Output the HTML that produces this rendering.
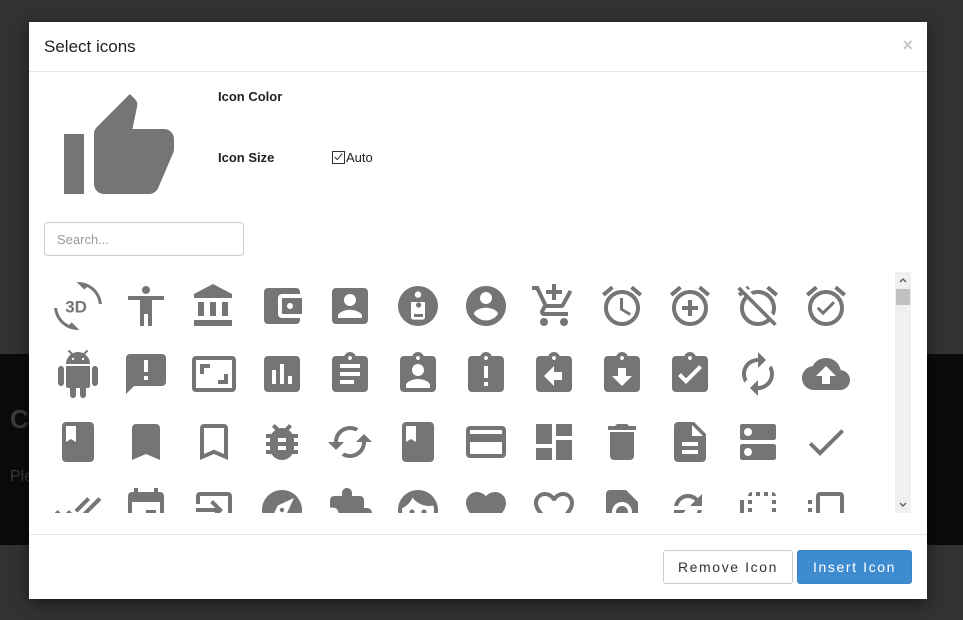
<!DOCTYPE html>
<html><head><meta charset="utf-8">
<style>
*{box-sizing:border-box;margin:0;padding:0}
body{width:963px;height:620px;overflow:hidden;background:#323232;font-family:"Liberation Sans",Arial,sans-serif;position:relative}
.band{position:absolute;left:0;top:354px;width:963px;height:191px;background:#0b0b0b}
.bgc{position:absolute;left:10px;top:404px;font-size:26px;font-weight:bold;color:#3a3a3a}
.bgp{position:absolute;left:10px;top:468px;font-size:16px;color:#3a3a3a}
.modal{position:absolute;left:29px;top:22px;width:898px;height:577px;background:#fff;box-shadow:0 4px 14px rgba(0,0,0,.5)}
.hdr{height:50px;border-bottom:1px solid #e5e5e5;position:relative}
.hdr h4{position:absolute;left:15px;top:15px;font-size:17px;font-weight:normal;color:#222}
.close{position:absolute;right:14px;top:13px;font-size:18px;color:#c8c8c8;font-weight:bold}
.lbl{position:absolute;font-size:13px;font-weight:bold;color:#222}
.auto{position:absolute;left:303px;top:128px;font-size:13px;color:#222;display:flex;align-items:center}
.cb{width:13px;height:13px;border:1px solid #333;margin-right:1px;position:relative}
.search{position:absolute;left:15px;top:200px;width:200px;height:34px;border:1px solid #ccc;border-radius:4px;font-size:13px;color:#999;padding:9px 12px}
.grid{position:absolute;left:15px;top:250px;width:850px;height:241px;overflow:hidden}
.grid svg{position:absolute;width:48px;height:48px;fill:#757575}
.sb{position:absolute;left:866px;top:250px;width:16px;height:241px;background:#f0f0f0}
.th{position:absolute;left:1px;top:17px;width:14px;height:16px;background:#c1c1c1}
.ftr{position:absolute;left:0;top:512px;width:898px;border-top:1px solid #e5e5e5;height:65px}
.btn{position:absolute;top:15px;height:34px;border-radius:3px;font-size:14px;letter-spacing:1.6px;text-align:center;line-height:32px}
</style></head><body>
<div class="band"></div>
<div class="bgc">C</div><div class="bgp">Ple</div>
<div class="modal">
<div class="hdr"><h4>Select icons</h4><span class="close">×</span></div>
<svg style="position:absolute;left:30px;top:67px;width:120px;height:120px;fill:#757575" viewBox="0 0 24 24"><path d="M1 21h4V9H1v12zm22-11c0-1.1-.9-2-2-2h-6.31l.95-4.57.03-.32c0-.41-.17-.79-.44-1.06L14.17 1 7.59 7.59C7.22 7.950 7 8.45 7 9v10c0 1.1.9 2 2 2h9c.83 0 1.54-.5 1.84-1.22l3.02-7.05c.09-.23.14-.47.14-.73v-1.91l-.01-.01L23 10z"/></svg>
<div class="lbl" style="left:189px;top:67px">Icon Color</div>
<div class="lbl" style="left:189px;top:128px">Icon Size</div>
<div class="auto"><span class="cb"><svg viewBox="0 0 13 13" style="position:absolute;left:0;top:0;width:11px;height:11px"><path d="M2 6l3 3 6-7" stroke="#333" stroke-width="1.2" fill="none"/></svg></span>Auto</div>
<div class="search">Search...</div>
<div class="grid">
<svg style="left:10px;top:10px" viewBox="0 0 24 24"><path d="M7.52 21.48C4.250 19.94 1.91 16.76 1.55 13H.05C.56 19.16 5.71 24 12 24l.66-.03-3.81-3.81-1.33 1.32zM12 0l-.66.03 3.81 3.81 1.33-1.33c3.27 1.55 5.61 4.72 5.96 8.480h1.5C23.44 4.84 18.29 0 12 0z"/><text x="5.6" y="15.2" font-size="8.5" font-weight="bold" fill="#757575" font-family="Liberation Sans">3D</text></svg>
<svg style="left:78px;top:10px" viewBox="0 0 24 24"><path d="M12 2c1.1 0 2 .9 2 2s-.9 2-2 2-2-.9-2-2 .9-2 2-2zm9 7h-6v13h-2v-6h-2v6H9V9H3V7h18v2z"/></svg>
<svg style="left:146px;top:10px" viewBox="0 0 24 24"><path d="M4 10v7h3v-7H4zm6 0v7h3v-7h-3zM2 22h19v-3H2v3zm14-12v7h3v-7h-3zm-4.5-9L2 6v2h19V6l-9.5-5z"/></svg>
<svg style="left:214px;top:10px" viewBox="0 0 24 24"><path d="M21 18v1c0 1.1-.9 2-2 2H5c-1.11 0-2-.9-2-2V5c0-1.1.89-2 2-2h14c1.1 0 2 .9 2 2v1h-9c-1.11 0-2 .9-2 2v8c0 1.1.89 2 2 2h9zm-9-2h10V8H12v8zm4-2.5c-.83 0-1.5-.67-1.5-1.5s.67-1.5 1.5-1.5 1.5.67 1.5 1.5-.67 1.5-1.5 1.5z"/></svg>
<svg style="left:282px;top:10px" viewBox="0 0 24 24"><path d="M3 5v14c0 1.1.89 2 2 2h14c1.1 0 2-.9 2-2V5c0-1.1-.9-2-2-2H5c-1.11 0-2 .9-2 2zm12 4c0 1.66-1.34 3-3 3s-3-1.34-3-3 1.34-3 3-3 3 1.34 3 3zm-9 8c0-2 4-3.1 6-3.1s6 1.1 6 3.1v1H6v-1z"/></svg>
<svg style="left:350px;top:10px" viewBox="0 0 24 24"><circle cx="12" cy="12" r="10"/><circle cx="12" cy="6.3" r="1.6" fill="#fff"/><path d="M8.5 10h7v7.5c0 .8-.6 1.3-1.3 1.3H9.8c-.8 0-1.3-.6-1.3-1.3z" fill="#fff"/><path d="M11 11.5a1.3 1.3 0 1 0 2.6 0 1.3 1.3 0 1 0-2.6 0zM10 16h4.5v1.5H10z" fill="#757575"/></svg>
<svg style="left:418px;top:10px" viewBox="0 0 24 24"><path d="M12 2C6.48 2 2 6.48 2 12s4.48 10 10 10 10-4.480 10-10S17.52 2 12 2zm0 3c1.66 0 3 1.34 3 3s-1.34 3-3 3-3-1.34-3-3 1.34-3 3-3zm0 14.2c-2.5 0-4.71-1.28-6-3.22.03-1.99 4-3.08 6-3.08 1.99 0 5.97 1.09 6 3.08-1.29 1.94-3.5 3.22-6 3.22z"/></svg>
<svg style="left:486px;top:10px" viewBox="0 0 24 24"><path d="M11 9h2V6h3V4h-3V1h-2v3H8v2h3v3zm-4 9c-1.1 0-1.99.9-1.99 2S5.9 22 7 22s2-.9 2-2-.9-2-2-2zm10 0c-1.1 0-1.99.9-1.99 2s.89 2 1.99 2 2-.9 2-2-.9-2-2-2zm-9.83-3.25l.03-.12.9-1.63h7.45c.75 0 1.41-.41 1.75-1.03l3.86-7.01L19.42 4h-.01l-1.1 2-2.76 5H8.53l-.13-.27L6.16 6l-.95-2-.94-2H1v2h2l3.6 7.59-1.35 2.45c-.16.28-.25.61-.25.96 0 1.1.9 2 2 2h12v-2H7.42c-.13 0-.25-.11-.25-.25z"/></svg>
<svg style="left:554px;top:10px" viewBox="0 0 24 24"><path d="M22 5.72l-4.6-3.86-1.29 1.53 4.6 3.86L22 5.72zM7.88 3.39L6.6 1.86 2 5.71l1.29 1.53 4.59-3.85zM12.5 8H11v6l4.75 2.85.75-1.23-4-2.37V8zM12 4c-4.97 0-9 4.03-9 9s4.02 9 9 9c4.97 0 9-4.03 9-9s-4.03-9-9-9zm0 16c-3.87 0-7-3.13-7-7s3.13-7 7-7 7 3.13 7 7-3.13 7-7 7z"/></svg>
<svg style="left:622px;top:10px" viewBox="0 0 24 24"><path d="M22 5.72l-4.6-3.86-1.29 1.53 4.6 3.86L22 5.72zM7.88 3.39L6.6 1.86 2 5.71l1.29 1.53 4.59-3.85zM12 4c-4.97 0-9 4.03-9 9s4.02 9 9 9c4.97 0 9-4.03 9-9s-4.03-9-9-9zm0 16c-3.87 0-7-3.13-7-7s3.13-7 7-7 7 3.13 7 7-3.13 7-7 7zM13 9h-2v3H8v2h3v3h2v-3h3v-2h-3V9z"/></svg>
<svg style="left:690px;top:10px" viewBox="0 0 24 24"><path d="M12 6c3.87 0 7 3.13 7 7 0 .84-.16 1.65-.43 2.4l1.52 1.52c.58-1.19.91-2.51.91-3.92 0-4.97-4.03-9-9-9-1.41 0-2.73.33-3.92.91L9.6 6.43C10.35 6.16 11.16 6 12 6zm10-.28l-4.6-3.86-1.29 1.53 4.6 3.86L22 5.72zM2.92 2.29L1.65 3.57 2.98 4.9l-1.11.93 1.42 1.42 1.11-.94.8.8C3.83 8.69 3 10.75 3 13c0 4.97 4.02 9 9 9 2.25 0 4.31-.83 5.89-2.2l2.2 2.2 1.27-1.27L3.89 3.27l-.97-.98zm13.55 16.1C15.26 19.39 13.7 20 12 20c-3.87 0-7-3.13-7-7 0-1.7.61-3.26 1.61-4.47l9.86 9.86zM8.02 3.28L6.6 1.86l-.86.71 1.42 1.42.86-.71z"/></svg>
<svg style="left:758px;top:10px" viewBox="0 0 24 24"><path d="M22 5.72l-4.6-3.86-1.29 1.53 4.6 3.86L22 5.72zM7.88 3.39L6.6 1.86 2 5.71l1.29 1.53 4.59-3.85zM12 4c-4.97 0-9 4.03-9 9s4.02 9 9 9c4.97 0 9-4.03 9-9s-4.03-9-9-9zm0 16c-3.87 0-7-3.13-7-7s3.13-7 7-7 7 3.13 7 7-3.13 7-7 7zM10.54 14.53L8.41 12.4l-1.06 1.06 3.18 3.18 6-6-1.06-1.06-4.93 4.95z"/></svg>

<svg style="left:10px;top:78px" viewBox="0 0 24 24"><path d="M6 18c0 .55.45 1 1 1h1v3.5c0 .83.67 1.5 1.5 1.5s1.5-.67 1.5-1.5V19h2v3.5c0 .83.67 1.5 1.5 1.5s1.5-.67 1.5-1.5V19h1c.55 0 1-.45 1-1V8H6v10zM3.5 8C2.67 8 2 8.67 2 9.5v7c0 .83.67 1.5 1.5 1.5S5 17.33 5 16.5v-7C5 8.67 4.33 8 3.5 8zm17 0c-.83 0-1.5.67-1.5 1.5v7c0 .83.67 1.5 1.5 1.5s1.5-.67 1.5-1.5v-7c0-.83-.67-1.5-1.5-1.5zm-4.97-5.84l1.3-1.3c.2-.2.2-.51 0-.71-.2-.2-.51-.2-.71 0l-1.48 1.48C13.85 1.23 12.95 1 12 1c-.96 0-1.86.23-2.66.63L7.85.15c-.2-.2-.51-.2-.71 0-.2.2-.2.51 0 .71l1.31 1.31C6.97 3.26 6 5.010 6 7h12c0-1.99-.97-3.75-2.47-4.84zM10 5H9V4h1v1zm5 0h-1V4h1v1z"/></svg>
<svg style="left:78px;top:78px" viewBox="0 0 24 24"><path d="M20 2H4c-1.1 0-1.99.9-1.99 2L2 22l4-4h14c1.1 0 2-.9 2-2V4c0-1.1-.9-2-2-2zm-7 9h-2V5h2v6zm0 4h-2v-2h2v2z"/></svg>
<svg style="left:146px;top:78px" viewBox="0 0 24 24"><path d="M19 12h-2v3h-3v2h5v-5zM7 9h3V7H5v5h2V9zm14-6H3c-1.1 0-2 .9-2 2v14c0 1.1.9 2 2 2h18c1.1 0 2-.9 2-2V5c0-1.1-.9-2-2-2zm0 16.01H3V4.99h18v14.02z"/></svg>
<svg style="left:214px;top:78px" viewBox="0 0 24 24"><path d="M19 3H5c-1.1 0-2 .9-2 2v14c0 1.1.9 2 2 2h14c1.1 0 2-.9 2-2V5c0-1.1-.9-2-2-2zM9 17H7v-7h2v7zm4 0h-2V7h2v10zm4 0h-2v-4h2v4z"/></svg>
<svg style="left:282px;top:78px" viewBox="0 0 24 24"><path d="M19 3h-4.18C14.4 1.84 13.3 1 12 1c-1.3 0-2.4.84-2.82 2H5c-1.1 0-2 .9-2 2v14c0 1.1.9 2 2 2h14c1.1 0 2-.9 2-2V5c0-1.1-.9-2-2-2zm-7 0c.55 0 1 .45 1 1s-.45 1-1 1-1-.45-1-1 .45-1 1-1zm2 14H7v-2h7v2zm3-4H7v-2h10v2zm0-4H7V7h10v2z"/></svg>
<svg style="left:350px;top:78px" viewBox="0 0 24 24"><path d="M19 3h-4.18C14.4 1.84 13.3 1 12 1c-1.3 0-2.4.84-2.82 2H5c-1.1 0-2 .9-2 2v14c0 1.1.9 2 2 2h14c1.1 0 2-.9 2-2V5c0-1.1-.9-2-2-2zm-7 0c.55 0 1 .45 1 1s-.45 1-1 1-1-.45-1-1 .45-1 1-1zm0 4c1.66 0 3 1.34 3 3s-1.34 3-3 3-3-1.34-3-3 1.34-3 3-3zm6 12H6v-1.4c0-2 4-3.1 6-3.1s6 1.1 6 3.1V19z"/></svg>
<svg style="left:418px;top:78px" viewBox="0 0 24 24"><path d="M19 3h-4.18C14.4 1.84 13.3 1 12 1c-1.3 0-2.4.84-2.82 2H5c-1.1 0-2 .9-2 2v14c0 1.1.9 2 2 2h14c1.1 0 2-.9 2-2V5c0-1.1-.9-2-2-2zm-6 15h-2v-2h2v2zm0-4h-2V8h2v6zm-1-9c-.55 0-1-.45-1-1s.45-1 1-1 1 .45 1 1-.45 1-1 1z"/></svg>
<svg style="left:486px;top:78px" viewBox="0 0 24 24"><path d="M19 3h-4.18C14.4 1.84 13.3 1 12 1c-1.3 0-2.4.84-2.82 2H5c-1.1 0-2 .9-2 2v14c0 1.1.9 2 2 2h14c1.1 0 2-.9 2-2V5c0-1.1-.9-2-2-2zm-7 0c.55 0 1 .45 1 1s-.45 1-1 1-1-.45-1-1 .45-1 1-1zm4 12h-4v3l-5-5 5-5v3h4v4z"/></svg>
<svg style="left:554px;top:78px" viewBox="0 0 24 24"><path d="M19 3h-4.18C14.4 1.84 13.3 1 12 1c-1.3 0-2.4.84-2.82 2H5c-1.1 0-2 .9-2 2v14c0 1.1.9 2 2 2h14c1.1 0 2-.9 2-2V5c0-1.1-.9-2-2-2zm-7 0c.55 0 1 .45 1 1s-.45 1-1 1-1-.45-1-1 .45-1 1-1zm0 15l-5-5h3V9h4v4h3l-5 5z"/></svg>
<svg style="left:622px;top:78px" viewBox="0 0 24 24"><path d="M19 3h-4.18C14.4 1.84 13.3 1 12 1c-1.3 0-2.4.84-2.82 2H5c-1.1 0-2 .9-2 2v14c0 1.1.9 2 2 2h14c1.1 0 2-.9 2-2V5c0-1.1-.9-2-2-2zm-7 0c.55 0 1 .45 1 1s-.45 1-1 1-1-.45-1-1 .45-1 1-1zm-2 14l-4-4 1.41-1.41L10 14.17l6.59-6.59L18 9l-8 8z"/></svg>
<svg style="left:690px;top:78px" viewBox="0 0 24 24"><path d="M12 6v3l4-4-4-4v3c-4.42 0-8 3.58-8 8 0 1.57.46 3.03 1.24 4.26L6.7 14.8c-.45-.83-.7-1.79-.7-2.8 0-3.31 2.69-6 6-6zm6.76 1.74L17.3 9.2c.44.84.7 1.79.7 2.8 0 3.31-2.69 6-6 6v-3l-4 4 4 4v-3c4.42 0 8-3.58 8-8 0-1.57-.46-3.03-1.24-4.26z"/></svg>
<svg style="left:758px;top:78px" viewBox="0 0 24 24"><path d="M19.35 10.04C18.67 6.59 15.64 4 12 4 9.11 4 6.6 5.64 5.35 8.04 2.34 8.36 0 10.91 0 14c0 3.31 2.69 6 6 6h13c2.76 0 5-2.24 5-5 0-2.64-2.05-4.78-4.65-4.96zM14 13v4h-4v-4H7l5-5 5 5h-3z"/></svg>

<svg style="left:10px;top:146px" viewBox="0 0 24 24"><path d="M18 2H6c-1.1 0-2 .9-2 2v16c0 1.1.9 2 2 2h12c1.1 0 2-.9 2-2V4c0-1.1-.9-2-2-2zM6 4h5v8l-2.5-1.5L6 12V4z"/></svg>
<svg style="left:78px;top:146px" viewBox="0 0 24 24"><path d="M17 3H7c-1.1 0-1.99.9-1.99 2L5 21l7-3 7 3V5c0-1.1-.9-2-2-2z"/></svg>
<svg style="left:146px;top:146px" viewBox="0 0 24 24"><path d="M17 3H7c-1.1 0-1.99.9-1.99 2L5 21l7-3 7 3V5c0-1.1-.9-2-2-2zm0 15l-5-2.18L7 18V5h10v13z"/></svg>
<svg style="left:214px;top:146px" viewBox="0 0 24 24"><path d="M20 8h-2.81c-.45-.78-1.07-1.45-1.82-1.96L17 4.41 15.59 3l-2.17 2.17C12.96 5.06 12.49 5 12 5c-.49 0-.96.06-1.41.17L8.41 3 7 4.41l1.62 1.63C7.88 6.55 7.26 7.22 6.81 8H4v2h2.09c-.05.33-.09.66-.09 1v1H4v2h2v1c0 .34.04.67.09 1H4v2h2.81c1.04 1.79 2.97 3 5.19 3s4.15-1.21 5.19-3H20v-2h-2.09c.05-.33.09-.66.09-1v-1h2v-2h-2v-1c0-.34-.04-.67-.09-1H20V8zm-6 8h-4v-2h4v2zm0-4h-4v-2h4v2z"/></svg>
<svg style="left:282px;top:146px" viewBox="0 0 24 24"><path d="M19 8l-4 4h3c0 3.31-2.69 6-6 6-1.01 0-1.97-.25-2.8-.7l-1.46 1.46C8.97 19.54 10.43 20 12 20c4.42 0 8-3.58 8-8h3l-4-4zM6 12c0-3.31 2.69-6 6-6 1.01 0 1.97.25 2.8.7l1.46-1.46C15.03 4.46 13.57 4 12 4c-4.42 0-8 3.58-8 8H1l4 4 4-4H6z"/></svg>
<svg style="left:350px;top:146px" viewBox="0 0 24 24"><path d="M18 2H6c-1.1 0-2 .9-2 2v16c0 1.1.9 2 2 2h12c1.1 0 2-.9 2-2V4c0-1.1-.9-2-2-2zM6 4h5v8l-2.5-1.5L6 12V4z"/></svg>
<svg style="left:418px;top:146px" viewBox="0 0 24 24"><path d="M20 4H4c-1.11 0-1.99.89-1.99 2L2 18c0 1.11.89 2 2 2h16c1.11 0 2-.89 2-2V6c0-1.11-.89-2-2-2zm0 14H4v-6h16v6zm0-10H4V6h16v2z"/></svg>
<svg style="left:486px;top:146px" viewBox="0 0 24 24"><path d="M3 13h8V3H3v10zm0 8h8v-6H3v6zm10 0h8V11h-8v10zm0-18v6h8V3h-8z"/></svg>
<svg style="left:554px;top:146px" viewBox="0 0 24 24"><path d="M6 19c0 1.1.9 2 2 2h8c1.1 0 2-.9 2-2V7H6v12zM19 4h-3.5l-1-1h-5l-1 1H5v2h14V4z"/></svg>
<svg style="left:622px;top:146px" viewBox="0 0 24 24"><path d="M14 2H6c-1.1 0-1.99.9-1.99 2L4 20c0 1.1.89 2 1.99 2H18c1.1 0 2-.9 2-2V8l-6-6zm2 16H8v-2h8v2zm0-4H8v-2h8v2zm-3-5V3.5L18.5 9H13z"/></svg>
<svg style="left:690px;top:146px" viewBox="0 0 24 24"><path d="M20 13H4c-.55 0-1 .45-1 1v6c0 .55.45 1 1 1h16c.55 0 1-.45 1-1v-6c0-.55-.45-1-1-1zM7 19c-1.1 0-2-.9-2-2s.9-2 2-2 2 .9 2 2-.9 2-2 2zM20 3H4c-.55 0-1 .45-1 1v6c0 .55.45 1 1 1h16c.55 0 1-.45 1-1V4c0-.55-.45-1-1-1zM7 9c-1.1 0-2-.9-2-2s.9-2 2-2 2 .9 2 2-.9 2-2 2z"/></svg>
<svg style="left:758px;top:146px" viewBox="0 0 24 24"><path d="M9 16.2L4.8 12l-1.4 1.4L9 19 21 7l-1.4-1.4L9 16.2z"/></svg>

<svg style="left:10px;top:214px" viewBox="0 0 24 24"><path d="M18 7l-1.41-1.41-6.34 6.34 1.41 1.41L18 7zm4.24-1.41L11.66 16.17 7.48 12l-1.41 1.41L11.66 19l12-12-1.42-1.41zM.41 13.41L6 19l1.41-1.41L1.83 12 .41 13.41z"/></svg>
<svg style="left:78px;top:214px" viewBox="0 0 24 24"><path d="M17 12h-5v5h5v-5zM16 1v2H8V1H6v2H5c-1.11 0-1.99.9-1.99 2L3 19c0 1.1.89 2 2 2h14c1.1 0 2-.9 2-2V5c0-1.1-.9-2-2-2h-1V1h-2zm3 18H5V8h14v11z"/></svg>
<svg style="left:146px;top:214px" viewBox="0 0 24 24"><path d="M10.09 15.59L11.5 17l5-5-5-5-1.41 1.41L12.67 11H3v2h9.67l-2.58 2.59zM19 3H5c-1.11 0-2 .9-2 2v4h2V5h14v14H5v-4H3v4c0 1.1.89 2 2 2h14c1.1 0 2-.9 2-2V5c0-1.1-.9-2-2-2z"/></svg>
<svg style="left:214px;top:214px" viewBox="0 0 24 24"><path d="M12 10.9c-.61 0-1.1.49-1.1 1.1s.49 1.1 1.1 1.1c.61 0 1.1-.49 1.1-1.1s-.49-1.1-1.1-1.1zM12 2C6.48 2 2 6.48 2 12s4.48 10 10 10 10-4.48 10-10S17.52 2 12 2zm2.19 12.19L6 18l3.81-8.19L18 6l-3.81 8.19z"/></svg>
<svg style="left:282px;top:214px" viewBox="0 0 24 24"><path d="M20.5 11H19V7c0-1.1-.9-2-2-2h-4V3.5C13 2.12 11.88 1 10.5 1S8 2.12 8 3.5V5H4c-1.1 0-1.99.9-1.99 2v3.8H3.5c1.49 0 2.7 1.21 2.7 2.7s-1.21 2.7-2.7 2.7H2V20c0 1.1.9 2 2 2h3.8v-1.5c0-1.49 1.21-2.7 2.7-2.7 1.49 0 2.7 1.21 2.7 2.7V22H17c1.1 0 2-.9 2-2v-4h1.5c1.38 0 2.5-1.12 2.5-2.5S21.88 11 20.5 11z"/></svg>
<svg style="left:350px;top:214px" viewBox="0 0 24 24"><path d="M9 11.75c-.69 0-1.25.56-1.25 1.25s.56 1.25 1.25 1.25 1.25-.56 1.25-1.25-.56-1.25-1.25-1.25zm6 0c-.69 0-1.25.56-1.25 1.25s.56 1.25 1.25 1.25 1.25-.56 1.25-1.25-.56-1.25-1.25-1.25zM12 2C6.48 2 2 6.48 2 12s4.48 10 10 10 10-4.48 10-10S17.52 2 12 2zm0 18c-4.41 0-8-3.59-8-8 0-.29.02-.58.05-.86 2.36-1.05 4.23-2.98 5.21-5.37C11.07 8.33 14.05 10 17.42 10c.78 0 1.53-.09 2.25-.26.21.71.33 1.47.33 2.26 0 4.41-3.59 8-8 8z"/></svg>
<svg style="left:418px;top:214px" viewBox="0 0 24 24"><path d="M12 21.35l-1.45-1.32C5.4 15.36 2 12.28 2 8.5 2 5.42 4.42 3 7.5 3c1.74 0 3.41.81 4.5 2.09C13.09 3.81 14.76 3 16.5 3 19.58 3 22 5.42 22 8.5c0 3.78-3.4 6.86-8.55 11.54L12 21.35z"/></svg>
<svg style="left:486px;top:214px" viewBox="0 0 24 24"><path d="M16.5 3c-1.74 0-3.41.81-4.5 2.09C10.91 3.81 9.24 3 7.5 3 4.42 3 2 5.42 2 8.5c0 3.78 3.4 6.86 8.55 11.54L12 21.35l1.45-1.32C18.6 15.36 22 12.28 22 8.5 22 5.42 19.58 3 16.5 3zm-4.4 15.55l-.1.1-.1-.1C7.14 14.24 4 11.39 4 8.5 4 6.5 5.5 5 7.5 5c1.54 0 3.04.99 3.57 2.36h1.87C13.46 5.99 14.96 5 16.5 5c2 0 3.5 1.5 3.5 3.5 0 2.89-3.14 5.74-7.9 10.05z"/></svg>
<svg style="left:554px;top:214px" viewBox="0 0 24 24"><path d="M20 19.59V8l-6-6H6c-1.1 0-1.99.9-1.99 2L4 20c0 1.1.89 2 1.99 2H18c.45 0 .85-.15 1.19-.4l-4.43-4.43c-.8.52-1.74.83-2.76.83-2.76 0-5-2.24-5-5s2.24-5 5-5 5 2.24 5 5c0 1.02-.31 1.96-.83 2.75L20 19.59zM9 13c0 1.66 1.34 3 3 3s3-1.34 3-3-1.34-3-3-3-3 1.34-3 3z"/></svg>
<svg style="left:622px;top:214px" viewBox="0 0 24 24"><path d="M11 6c1.38 0 2.63.56 3.54 1.46L12 10h6V4l-2.05 2.05C14.68 4.78 12.93 4 11 4c-3.53 0-6.43 2.61-6.92 6H6.1c.46-2.28 2.48-4 4.9-4zm5.64 9.14c.66-.9 1.12-1.97 1.28-3.14H15.9c-.46 2.28-2.48 4-4.9 4-1.38 0-2.630-.56-3.54-1.46L10 12H4v6l2.05-2.05C7.32 17.22 9.07 18 11 18c1.55 0 2.98-.51 4.14-1.36L20 21.49 21.49 20l-4.85-4.86z"/></svg>
<svg style="left:690px;top:214px" viewBox="0 0 24 24"><path d="M9 7H7v2h2V7zm0 4H7v2h2v-2zm0-8c-1.11 0-2 .9-2 2h2V3zm4 12h-2v2h2v-2zm6-12v2h2c0-1.1-.9-2-2-2zm-6 0h-2v2h2V3zM9 17v-2H7c0 1.1.89 2 2 2zm10-4h2v-2h-2v2zm0-4h2V7h-2v2zm0 8c1.1 0 2-.9 2-2h-2v2zM5 7H3v12c0 1.1.89 2 2 2h12v-2H5V7zm10-2h2V3h-2v2zm0 12h2v-2h-2v2z"/></svg>
<svg style="left:758px;top:214px" viewBox="0 0 24 24"><path d="M3 13h2v-2H3v2zm0 4h2v-2H3v2zm2 4v-2H3c0 1.1.89 2 2 2zM3 9h2V7H3v2zm12 12h2v-2h-2v2zm4-18H9c-1.11 0-2 .9-2 2v10c0 1.1.89 2 2 2h10c1.1 0 2-.9 2-2V5c0-1.1-.9-2-2-2zm0 12H9V5h10v10zm-8 6h2v-2h-2v2zm-4 0h2v-2H7v2z"/></svg>
</div>
<div class="sb"><svg style="position:absolute;left:4px;top:5px;width:8px;height:6px" viewBox="0 0 8 6"><path d="M1 5l3-3 3 3" stroke="#555" fill="none" stroke-width="1.3"/></svg><div class="th"></div><svg style="position:absolute;left:4px;top:230px;width:8px;height:6px" viewBox="0 0 8 6"><path d="M1 1l3 3 3-3" stroke="#555" fill="none" stroke-width="1.3"/></svg></div>
<div class="ftr">
<div class="btn" style="left:634px;width:130px;border:1px solid #ccc;color:#333;background:#fff">Remove Icon</div>
<div class="btn" style="left:768px;width:115px;background:#3e8bd0;color:#fff;border:1px solid #3a85c8">Insert Icon</div>
</div>
</div>
</body></html>
